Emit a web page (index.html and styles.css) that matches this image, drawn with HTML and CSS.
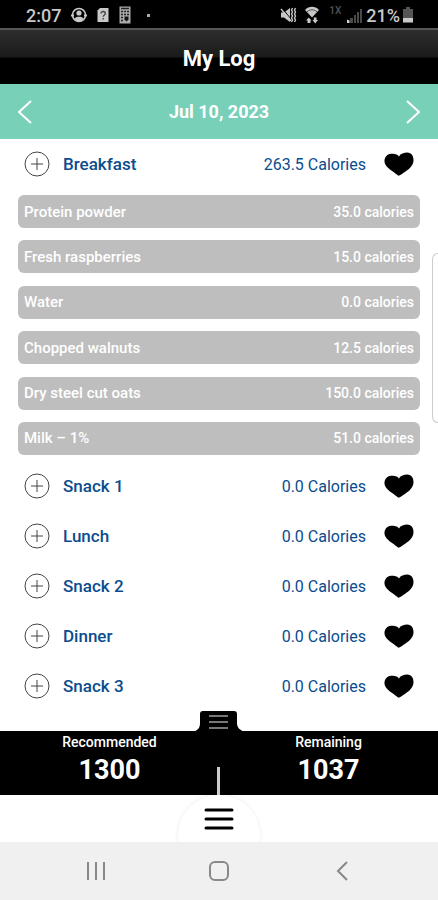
FILE: index.html
```html
<!DOCTYPE html>
<html lang="en">
<head>
<meta charset="utf-8">
<meta name="viewport" content="width=device-width, initial-scale=1">
<title>My Log</title>
<link rel="stylesheet" href="styles.css">
</head>
<body>
<svg class="defs" aria-hidden="true">
  <symbol id="plus" viewBox="0 0 26 26"><circle cx="13" cy="13" r="12"/><path d="M13 7v12M7 13h12"/></symbol>
  <symbol id="heart" viewBox="0 0 30 24"><path d="M15 4.500C16.500 1.500 20 .5 23.400.5 27.500.6 29.600 4 29.500 8.500 29.200 13 26 16.500 21.500 19.500 18.800 21.300 17 23 14.600 23.700 12.500 22.600 11 21 8.500 19.300 4.500 16.500 1 14 .5 9.800.2 5.500 3 2.200 7 1.800 10.500 1.300 13.500 2 15 4.500Z"/></symbol>
</svg>
<div class="statusbar">
  <div class="status-left">
    <span class="clock">2:07</span>
    <svg width="16" height="16" viewBox="0 0 16 16"><circle cx="8" cy="8" r="6.500" fill="none" stroke="#c8c8c8" stroke-width="1.500"/><circle cx="8" cy="6" r="2.600" fill="#c8c8c8"/><path d="M3.500 11.500C5 9 11 9 12.500 11.500L10.500 14h-5Z" fill="#c8c8c8"/><path d="M0 8.500h3M13 8.500h3" stroke="#c8c8c8" stroke-width="2"/></svg>
    <svg width="12" height="16" viewBox="0 0 12 16"><path d="M3 1h8.500v14H.5V3.500Z" fill="#c8c8c8"/><path d="M4 6.500C4 3.800 8.300 4 8.300 6.400 8.300 8 6.200 8 6.200 9.800M6.200 11v1.500" fill="none" stroke="#444" stroke-width="1.400"/></svg>
    <svg width="12" height="18" viewBox="0 0 12 18"><path d="M.5.500h11v17H.5Z" fill="#aaa"/><path d="M2 2.500h8M2 5.500h2M5 5.500h2M8 5.500h2M2 8.500h2M5 8.500h2M8 8.500h2M2 11.500h2M2 14.500h2" stroke="#222" stroke-width="1.600"/><path d="M5.500 10.500h4v3l-2 2-2-2Z" fill="#111"/></svg>
    <span class="dot"></span>
  </div>
  <div class="status-right">
    <svg width="17" height="16" viewBox="0 0 17 16"><path d="M1 5.500h3l6-4.500v14l-6-4.500H1Z" fill="#c8c8c8"/><path d="M2 1l9 11" stroke="#000"/><path d="M1 2l10 12" stroke="#c8c8c8" stroke-width="1.300"/><path d="M12.500 1l-1 2 1 2-1 2 1 2-1 2 1 2-1 2M15.500 1l-1 2 1 2-1 2 1 2-1 2 1 2-1 2" fill="none" stroke="#c8c8c8" stroke-width="1.400"/></svg>
    <svg class="wifi" width="14" height="18" viewBox="0 0 14 18"><path d="M0 4C4-.3 10-.3 14 4L7 11.500Z" fill="#c8c8c8"/><path d="M2 5.800c3-2.600 7-2.600 10 0" fill="none" stroke="#333" stroke-width=".8"/><path d="M1 14.500l2.700-3 2.800 3H5.500v2.500h-3v-2.500ZM7.500 14h1.300v-2.500h2.700v2.500h1.500L10.200 17.500Z" fill="#c8c8c8"/></svg>
    <span class="network">1X</span>
    <svg class="signal" width="15" height="14" viewBox="0 0 15 14"><path d="M3 14V9h3v5M7 14V6h2v8M10 14V3h2v11M13 14V0h2v14" fill="#4a4a4a"/><path d="M0 10.500l2.500 1V14H0Z" fill="#d0d0d0"/></svg>
    <span class="percent">21%</span>
    <svg width="12" height="16" viewBox="0 0 12 16"><path d="M4 0h4v2h3v9H1V2h3Z" fill="#555"/><path d="M1 11h10v4.500H1Z" fill="#c8c8c8"/></svg>
  </div>
</div>
<header class="titlebar"><h1>My Log</h1></header>
<div class="datebar">
  <button aria-label="Previous day"><svg width="14" height="24" viewBox="0 0 14 24"><path d="M13 1L1 12l12 11"/></svg></button>
  <time datetime="2023-07-10">Jul 10, 2023</time>
  <button aria-label="Next day"><svg width="14" height="24" viewBox="0 0 14 24"><path d="M1 1l12 11L1 23"/></svg></button>
</div>
<main>
  <section>
    <div class="meal"><button class="add" aria-label="Add to Breakfast"><svg><use href="#plus"/></svg></button><h2>Breakfast</h2><span class="total">263.5 Calories</span><button class="fav" aria-label="Favorite Breakfast"><svg><use href="#heart"/></svg></button></div>
    <ul class="foods">
      <li><span>Protein powder</span><span class="amount">35.0 calories</span></li>
      <li><span>Fresh raspberries</span><span class="amount">15.0 calories</span></li>
      <li><span>Water</span><span class="amount">0.0 calories</span></li>
      <li><span>Chopped walnuts</span><span class="amount">12.5 calories</span></li>
      <li><span>Dry steel cut oats</span><span class="amount">150.0 calories</span></li>
      <li><span>Milk – 1%</span><span class="amount">51.0 calories</span></li>
    </ul>
  </section>
  <section class="meal"><button class="add" aria-label="Add to Snack 1"><svg><use href="#plus"/></svg></button><h2>Snack 1</h2><span class="total">0.0 Calories</span><button class="fav" aria-label="Favorite Snack 1"><svg><use href="#heart"/></svg></button></section>
  <section class="meal"><button class="add" aria-label="Add to Lunch"><svg><use href="#plus"/></svg></button><h2>Lunch</h2><span class="total">0.0 Calories</span><button class="fav" aria-label="Favorite Lunch"><svg><use href="#heart"/></svg></button></section>
  <section class="meal"><button class="add" aria-label="Add to Snack 2"><svg><use href="#plus"/></svg></button><h2>Snack 2</h2><span class="total">0.0 Calories</span><button class="fav" aria-label="Favorite Snack 2"><svg><use href="#heart"/></svg></button></section>
  <section class="meal"><button class="add" aria-label="Add to Dinner"><svg><use href="#plus"/></svg></button><h2>Dinner</h2><span class="total">0.0 Calories</span><button class="fav" aria-label="Favorite Dinner"><svg><use href="#heart"/></svg></button></section>
  <section class="meal"><button class="add" aria-label="Add to Snack 3"><svg><use href="#plus"/></svg></button><h2>Snack 3</h2><span class="total">0.0 Calories</span><button class="fav" aria-label="Favorite Snack 3"><svg><use href="#heart"/></svg></button></section>
</main>
<div class="edge-handle"></div>
<section class="summary">
  <button class="pull-tab" aria-label="Show details"><svg width="52" height="22" viewBox="0 0 52 22"><path d="M0 22C5 20 7 18 7 13V4Q7 1 10 1H41Q44 1 44 4V13C44 18 47 20 52 22Z" fill="#000"/><path d="M16 6h19M16 12h19M16 18h19" stroke="#777" stroke-width="2"/></svg></button>
  <div class="figure"><span class="label">Recommended</span><strong>1300</strong></div>
  <div class="figure"><span class="label">Remaining</span><strong>1037</strong></div>
</section>
<nav class="menubar">
  <button aria-label="Menu"><svg width="30" height="24" viewBox="0 0 30 24"><path d="M2 3h26M2 12h26M2 21h26"/></svg></button>
</nav>
<nav class="sysnav">
  <button aria-label="Recent apps"><svg width="20" height="20" viewBox="0 0 20 20"><path d="M2 1v18M10 1v18M18 1v18"/></svg></button>
  <button aria-label="Home"><svg width="20" height="20" viewBox="0 0 20 20"><rect x="1" y="1" width="18" height="18" rx="5"/></svg></button>
  <button aria-label="Back"><svg width="20" height="20" viewBox="0 0 20 20"><path d="M15 1L6 10l9 9"/></svg></button>
</nav>
</body>
</html>
```
FILE: styles.css
```css
* { box-sizing: border-box; }
body {
  margin: 0;
  min-height: 100vh;
  display: flex;
  flex-direction: column;
  position: relative;
  background: #fff;
  font-family: Roboto, "Liberation Sans", sans-serif;
  font-weight: 500;
}
svg { display: block; }
.defs { position: absolute; width: 0; height: 0; }
h1, h2, ul { margin: 0; padding: 0; }
button { border: 0; padding: 0; background: none; display: block; font: inherit; }

.statusbar {
  height: 28px;
  padding: 2px 24px 0 26px;
  display: flex;
  align-items: center;
  justify-content: space-between;
  background: #000;
  color: #c8c8c8;
  font-size: 18px;
}
.status-left, .status-right { display: flex; align-items: center; }
.status-left { gap: 10px; }
.dot { width: 3px; height: 3px; margin-left: 6px; background: #aaa; }
.status-right { gap: 4px; }
.wifi { margin-left: 4px; }
.network { margin: 0 2px 8px 6px; color: #555; font-size: 10px; line-height: 10px; }
.signal { margin-top: 2px; }
.percent { margin-right: -2px; }

.titlebar {
  height: 56px;
  display: flex;
  align-items: center;
  justify-content: center;
  padding-top: 4px;
  border-top: 2px solid #555;
  background: linear-gradient(#2e2e2e, #1a1a1a 50%, #000 52%);
  color: #fff;
}
h1 { font-size: 22px; line-height: 28px; font-weight: 700; }

.datebar {
  height: 55px;
  padding: 0 18px;
  display: flex;
  align-items: center;
  justify-content: space-between;
  background: #78d0b8;
  color: #fff;
  font-size: 18px;
  font-weight: 700;
}
.datebar path { fill: none; stroke: #fff; stroke-width: 2; }

main { flex: 1; padding-bottom: 20px; }
.meal {
  height: 50px;
  padding: 0 24px;
  display: flex;
  align-items: center;
  color: #0a4c8e;
}
.add svg { width: 26px; height: 26px; fill: none; stroke: #444; stroke-width: 1; }
.meal h2 { margin-left: 13px; font-size: 17px; font-weight: 500; }
.total { margin-left: auto; margin-right: 18px; font-size: 16px; font-weight: 400; }
.fav svg { width: 30px; height: 24px; fill: #000; }

.foods {
  min-height: 260px;
  margin: 6px 18px;
  display: flex;
  flex-direction: column;
  justify-content: space-between;
  list-style: none;
}
.foods li {
  height: 33px;
  padding: 0 6px;
  display: flex;
  align-items: center;
  justify-content: space-between;
  border-radius: 6px;
  background: #bebebe;
  color: #fff;
  font-size: 15px;
}
.foods .amount { font-size: 14px; }

.edge-handle {
  position: absolute;
  top: 253px;
  right: 0;
  width: 6px;
  height: 170px;
  border: 1px solid #ccc;
  border-right: 0;
  border-radius: 6px 0 0 6px;
  background: #fff;
}

.summary {
  position: relative;
  height: 64px;
  display: grid;
  grid-template-columns: 1fr 1fr;
  background: #000;
  color: #fff;
}
.summary::after {
  content: "";
  position: absolute;
  left: 50%;
  bottom: 0;
  width: 3px;
  height: 28px;
  margin-left: -2px;
  background: #ccc;
}
.pull-tab { position: absolute; left: 50%; top: -21px; margin-left: -26px; }
.figure { display: flex; flex-direction: column; align-items: center; padding-top: 2px; }
.label { font-size: 14px; line-height: 18px; }
.figure strong { font-size: 27px; line-height: 38px; font-weight: 700; }

.menubar { height: 47px; display: flex; justify-content: center; overflow: hidden; background: #fff; }
.menubar button {
  width: 82px;
  height: 82px;
  padding: 12px 26px 0;
  display: flex;
  align-items: flex-start;
  border-radius: 50%;
  box-shadow: 0 0 5px #ececec;
}
.menubar path { stroke: #000; stroke-width: 3; stroke-linecap: round; }

.sysnav {
  height: 58px;
  padding: 0 35px;
  display: flex;
  align-items: center;
  justify-content: space-around;
  background: #f0f0f0;
}
.sysnav svg { fill: none; stroke: #888; stroke-width: 2; }
```
